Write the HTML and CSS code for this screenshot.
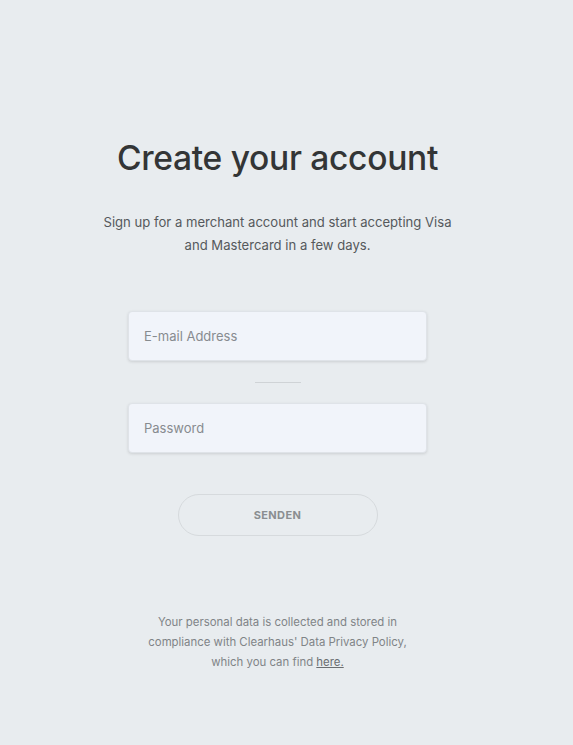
FILE: index.html
```html
<!DOCTYPE html>
<html>
<head>
<meta charset="utf-8">
<link rel="stylesheet" href="styles.css">
</head>
<body>
<main class="page">
  <h1 class="title">Create your account</h1>
  <p class="lead">Sign up for a merchant account and start accepting Visa<br>and Mastercard in a few days.</p>
  <form class="form">
    <div class="field"><span class="placeholder">E-mail Address</span></div>
    <div class="divider"></div>
    <div class="field"><span class="placeholder">Password</span></div>
    <button type="button" class="submit">SENDEN</button>
  </form>
  <p class="note">Your personal data is collected and stored in<br>compliance with Clearhaus' Data Privacy Policy,<br>which you can find <a href="#" class="link">here.</a></p>
</main>
</body>
</html>
```
FILE: styles.css
```css
html, body {
  margin: 0;
  padding: 0;
  background: #e8ecef;
}
body {
  font-family: Inter, "Noto Sans", sans-serif;
  height: 745px;
  overflow: hidden;
}
.page {
  display: flex;
  flex-direction: column;
  align-items: center;
  padding-top: 134px;
  padding-right: 18px;
}
.title {
  margin: 0;
  font-family: Inter, sans-serif;
  font-weight: 500;
  font-size: 33.6px;
  letter-spacing: -0.3px;
  line-height: 48px;
  color: #333536;
}
.lead {
  margin: 29px 0 0;
  font-size: 13.1px;
  line-height: 23px;
  color: #55595c;
  text-align: center;
}
.form {
  margin-top: 54px;
  display: flex;
  flex-direction: column;
  align-items: center;
}
.field {
  box-sizing: border-box;
  width: 299px;
  height: 50px;
  background: #f1f4fa;
  border: 1px solid #dfe3e8;
  border-radius: 4px;
  box-shadow: 0 1px 3px rgba(0,0,0,0.12);
  display: flex;
  align-items: center;
  padding-left: 15px;
}
.placeholder {
  font-size: 13px;
  color: #878b8f;
}
.divider {
  width: 46px;
  height: 1px;
  background: #cfd3d6;
  margin: 21px 0 20px;
}
.submit {
  margin-top: 41px;
  box-sizing: border-box;
  width: 200px;
  height: 42px;
  border: 1px solid #d6dadd;
  border-radius: 21px;
  background: transparent;
  font-family: Inter, sans-serif;
  font-weight: 700;
  font-size: 11px;
  letter-spacing: 0.4px;
  color: #8a8e91;
}
.note {
  margin: 76px 0 0;
  font-size: 11.4px;
  line-height: 20px;
  color: #808487;
  text-align: center;
}
.link {
  color: #6a6e71;
  text-decoration: underline;
}
```
